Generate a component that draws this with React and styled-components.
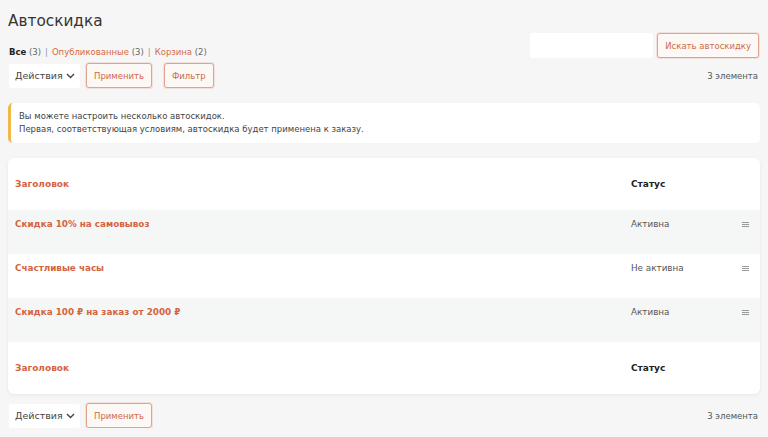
import styled, { createGlobalStyle } from 'styled-components';

const GlobalStyle = createGlobalStyle`
  html, body {
    margin: 0;
    padding: 0;
    background: #f6f6f6;
  }
  body {
    font-family: "DejaVu Sans", "Noto Sans", sans-serif;
    color: #3c3c3c;
  }
  * {
    box-sizing: border-box;
  }
`;

const rows = [
  { title: 'Скидка 10% на самовывоз', status: 'Активна' },
  { title: 'Счастливые часы', status: 'Не активна' },
  { title: 'Скидка 100 ₽ на заказ от 2000 ₽', status: 'Активна' },
];

export default function App() {
  return (
    <Page>
      <GlobalStyle />
      <Top>
        <div>
          <Title>Автоскидка</Title>
          <Views>
            <li>
              <b>Все</b> <Count>(3)</Count>
            </li>
            <Sep>|</Sep>
            <li>
              <ViewLink>Опубликованные</ViewLink> <Count>(3)</Count>
            </li>
            <Sep>|</Sep>
            <li>
              <ViewLink>Корзина</ViewLink> <Count>(2)</Count>
            </li>
          </Views>
        </div>
        <SearchBox>
          <SearchInput />
          <Button>Искать автоскидку</Button>
        </SearchBox>
      </Top>

      <TableNav>
        <Select>
          Действия <Chevron />
        </Select>
        <Button>Применить</Button>
        <Button $gap>Фильтр</Button>
        <ItemCount>3 элемента</ItemCount>
      </TableNav>

      <Notice>
        <p>Вы можете настроить несколько автоскидок.</p>
        <p>Первая, соответствующая условиям, автоскидка будет применена к заказу.</p>
      </Notice>

      <Card>
        <HeadRow>
          <HeadTitle>Заголовок</HeadTitle>
          <HeadStatus>Статус</HeadStatus>
          <span />
        </HeadRow>
        {rows.map((r, i) => (
          <Row key={r.title} $alt={i % 2 === 0}>
            <RowTitle>{r.title}</RowTitle>
            <RowStatus>{r.status}</RowStatus>
            <Handle>
              <i />
              <i />
              <i />
            </Handle>
          </Row>
        ))}
        <HeadRow>
          <HeadTitle>Заголовок</HeadTitle>
          <HeadStatus>Статус</HeadStatus>
          <span />
        </HeadRow>
      </Card>

      <TableNav $bottom>
        <Select>
          Действия <Chevron />
        </Select>
        <Button>Применить</Button>
        <ItemCount>3 элемента</ItemCount>
      </TableNav>
    </Page>
  );
}

function Chevron() {
  return (
    <svg width="9" height="6" viewBox="0 0 9 6" fill="none">
      <path d="M1 1l3.5 3.5L8 1" stroke="#444" strokeWidth="1.4" />
    </svg>
  );
}

const Page = styled.div`
  padding: 0 8px;
`;

const Top = styled.div`
  display: flex;
  justify-content: space-between;
  align-items: flex-end;
`;

const Title = styled.h1`
  margin: 0;
  padding-top: 10px;
  font-size: 15.3px;
  font-weight: 400;
  line-height: 22px;
  color: #333;
`;

const Views = styled.ul`
  list-style: none;
  margin: 14px 0 0 1px;
  padding: 0;
  display: flex;
  gap: 4px;
  font-size: 8.5px;
  line-height: 12px;

  li {
    color: #222;
  }
  b {
    font-weight: 700;
  }
`;

const Sep = styled.li`
  color: #999 !important;
`;

const ViewLink = styled.span`
  color: #d86a45;
`;

const Count = styled.span`
  color: #666;
`;

const SearchBox = styled.div`
  display: flex;
  gap: 4px;
  margin-right: 1px;
`;

const SearchInput = styled.div`
  width: 123px;
  height: 25px;
  background: #fff;
  border-radius: 3px;
`;

const Button = styled.button`
  height: 25px;
  padding: 0 7px;
  margin-left: ${(p) => (p.$gap ? '6px' : '0')};
  background: #fbf8f6;
  border: 1px solid #e0a48e;
  border-radius: 3px;
  color: #cf6b48;
  font-family: inherit;
  font-size: 8.5px;
  box-shadow: 0 0 0 1px rgba(224, 164, 142, 0.25);
`;

const TableNav = styled.div`
  display: flex;
  align-items: center;
  gap: 6px;
  margin: ${(p) => (p.$bottom ? '9px 0 0 1px' : '5px 0 0 1px')};
`;

const Select = styled.div`
  width: 71px;
  height: 24px;
  display: flex;
  align-items: center;
  justify-content: space-between;
  padding: 0 5px 0 6px;
  background: #fff;
  border-radius: 3px;
  font-size: 9.5px;
  color: #444;
`;

const ItemCount = styled.span`
  margin-left: auto;
  margin-right: 2px;
  font-size: 8.5px;
  color: #555;
`;

const Notice = styled.div`
  margin-top: 15px;
  padding: 7px 8px;
  background: #fff;
  border-left: 3px solid #f0b849;
  border-radius: 5px;
  font-size: 8.5px;
  line-height: 13px;
  color: #444;

  p {
    margin: 0;
  }
`;

const Card = styled.div`
  margin-top: 15px;
  background: #fff;
  border-radius: 6px;
  box-shadow: 0 1px 4px rgba(0, 0, 0, 0.06);
  overflow: hidden;
`;

const Grid = styled.div`
  display: grid;
  grid-template-columns: 1fr 111px 18px;
  padding-left: 7px;
`;

const HeadRow = styled(Grid)`
  height: 52px;
  align-items: center;
`;

const HeadTitle = styled.span`
  font-size: 9px;
  font-weight: 700;
  color: #d4643f;
`;

const HeadStatus = styled.span`
  font-size: 9px;
  font-weight: 700;
  color: #222;
`;

const Row = styled(Grid)`
  height: 44px;
  padding-top: 8px;
  background: ${(p) => (p.$alt ? '#f5f7f7' : '#fff')};
`;

const RowTitle = styled.span`
  font-size: 8.8px;
  font-weight: 700;
  line-height: 12px;
  color: #d4643f;
`;

const RowStatus = styled.span`
  font-size: 8.8px;
  line-height: 12px;
  color: #555;
`;

const Handle = styled.span`
  display: flex;
  flex-direction: column;
  gap: 1px;
  width: 7px;
  padding-top: 4px;

  i {
    display: block;
    height: 1px;
    background: #999;
  }
`;
